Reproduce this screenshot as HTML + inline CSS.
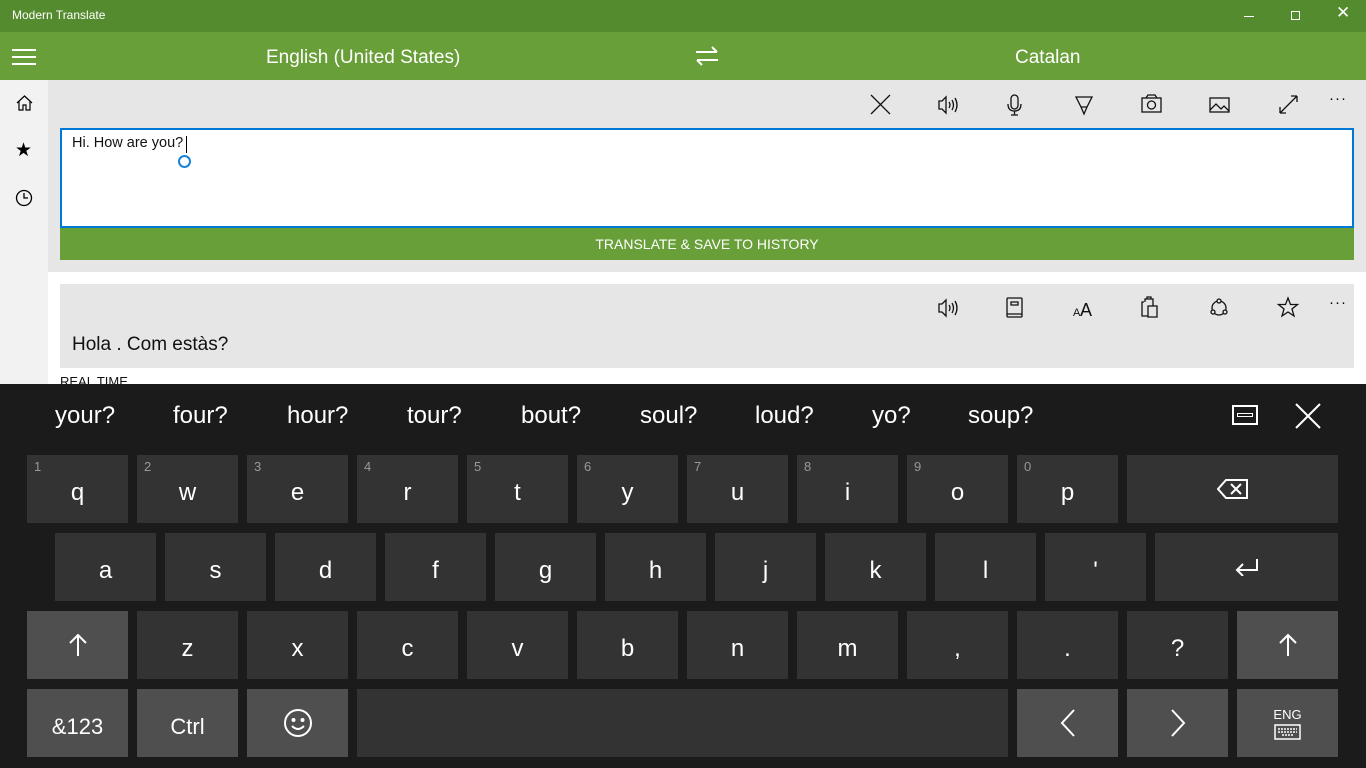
<!DOCTYPE html><html><head><meta charset="utf-8"><style>
*{margin:0;padding:0;box-sizing:border-box}
body{width:1366px;height:768px;overflow:hidden;position:relative;font-family:"Segoe UI","Liberation Sans",sans-serif;background:#fff}
.a{position:absolute}
.k{position:absolute;width:101px;height:68px;background:#333;color:#fff;font-size:24px;display:flex;align-items:center;justify-content:center;padding-top:8px}
.k.s{background:#4f4f4f}
.k.n{padding-top:0}
.k i{position:absolute;left:7px;top:4px;font-style:normal;font-size:13px;color:#999}
.sug{position:absolute;top:402px;color:#fff;font-size:24px}
svg{position:absolute}
</style></head><body>
<div class="a" style="left:0;top:0;width:1366px;height:32px;background:#548b2e"></div>
<div class="a" style="left:12px;top:8px;color:#fff;font-size:12px">Modern Translate</div>
<div class="a" style="left:1244px;top:16px;width:10px;height:1px;background:#fff"></div>
<div class="a" style="left:1291px;top:11px;width:9px;height:9px;border:1px solid #fff"></div>
<div class="a" style="left:1336px;top:3px;color:#fff;font-size:17px">✕</div>
<div class="a" style="left:0;top:32px;width:1366px;height:48px;background:#689f38"></div>
<div class="a" style="left:12px;top:49px;width:24px;height:2px;background:#fff;box-shadow:0 7px 0 #fff,0 14px 0 #fff"></div>
<div class="a" style="left:266px;top:47px;color:#fff;font-size:19px">English (United States)</div>
<div class="a" style="left:1015px;top:47px;color:#fff;font-size:19px">Catalan</div>
<svg style="left:694px;top:46px" width="26" height="20" viewBox="0 0 26 20" fill="none" stroke="#fff" stroke-width="2"><path d="M2 6h21M18 1l5 5M24 14H3M8 19l-5-5"/></svg>
<div class="a" style="left:0;top:80px;width:48px;height:304px;background:#f2f2f2"></div>
<svg style="left:16px;top:95px" width="17" height="16" viewBox="0 0 17 16" fill="none" stroke="#000" stroke-width="1.2"><path d="M1 8L8.5 1 16 8M3 6v9h4v-5h3v5h4V6"/></svg>
<div class="a" style="left:15px;top:139px;font-size:19px">★</div>
<svg style="left:15px;top:189px" width="18" height="18" fill="none" stroke="#000" stroke-width="1.3"><circle cx="9" cy="9" r="7.5"/><path d="M9 4v5h4"/></svg>
<div class="a" style="left:48px;top:80px;width:1318px;height:192px;background:#e6e6e6"></div>
<svg style="left:868px;top:92px" width="490" height="26" fill="none" stroke="#111" stroke-width="1.3">
<path d="M3 3l19 19M22 3L3 22"/>
<path d="M71 9h3l4-4v16l-4-4h-3zM81 10q2 3 0 6M84 8q3 5 0 10M87 6q4 7 0 14"/>
<rect x="143" y="3" width="7" height="14" rx="3.5"/><path d="M140 12q0 7 6.5 7t6.5-7M146.5 19v4M143 23h7"/>
<path d="M208 5h16l-5 10h-6zM213 15l3 7 3-7"/>
<rect x="274" y="6" width="19" height="14"/><circle cx="283.5" cy="13" r="4"/><path d="M278 6l2-3h7l2 3"/>
<rect x="342" y="6" width="19" height="14"/><path d="M342 18l6-6 5 5 3-3 5 5"/>
<path d="M412 21l17-17M412 21v-6M412 21h6M429 4h-6M429 4v6"/>
</svg>
<div class="a" style="left:1329px;top:90px;font-size:15px;letter-spacing:1px">···</div>
<div class="a" style="left:60px;top:128px;width:1294px;height:100px;background:#fff;border:2px solid #0078d7"></div>
<div class="a" style="left:72px;top:135px;font-size:14.5px;color:#111">Hi. How are you?</div>
<div class="a" style="left:186px;top:136px;width:1px;height:17px;background:#000"></div>
<div class="a" style="left:178px;top:155px;width:13px;height:13px;border:2px solid #1a83d8;border-radius:50%"></div>
<div class="a" style="left:60px;top:228px;width:1294px;height:32px;background:#689f38;color:#fff;font-size:14px;text-align:center;line-height:32px">TRANSLATE &amp; SAVE TO HISTORY</div>
<div class="a" style="left:60px;top:284px;width:1294px;height:84px;background:#e6e6e6"></div>
<svg style="left:930px;top:295px" width="380" height="26" fill="none" stroke="#111" stroke-width="1.3">
<path d="M9 9h3l4-4v16l-4-4h-3zM19 10q2 3 0 6M22 8q3 5 0 10M25 6q4 7 0 14"/>
<rect x="77" y="3" width="15" height="19" rx="1"/><path d="M77 19h15M81 7h7v3h-7z"/>
<text x="143" y="21" font-size="11" fill="#111" stroke="none" font-family="Liberation Sans">A</text><text x="150" y="21" font-size="18" fill="#111" stroke="none" font-family="Liberation Sans">A</text>
<path d="M214 7h-2v14h6M218 11h9v11h-9zM215 7v-3h8v7M217 4h4v-2h-4z"/>
<circle cx="289" cy="13" r="7"/><circle cx="289" cy="6" r="2" fill="#e6e6e6"/><circle cx="283" cy="17" r="2" fill="#e6e6e6"/><circle cx="295" cy="17" r="2" fill="#e6e6e6"/>
<path d="M358 3l2.5 6.5h7l-5.5 4.5 2 7-6-4-6 4 2-7-5.5-4.5h7z"/>
</svg>
<div class="a" style="left:1329px;top:294px;font-size:15px;letter-spacing:1px">···</div>
<div class="a" style="left:72px;top:334px;font-size:19px;color:#111">Hola . Com estàs?</div>
<div class="a" style="left:60px;top:374px;font-size:13px;color:#111">REAL TIME</div>
<div class="a" style="left:0;top:384px;width:1366px;height:384px;background:#1b1b1b"></div>
<div class="sug" style="left:55px">your?</div><div class="sug" style="left:173px">four?</div><div class="sug" style="left:287px">hour?</div><div class="sug" style="left:407px">tour?</div><div class="sug" style="left:521px">bout?</div><div class="sug" style="left:640px">soul?</div><div class="sug" style="left:755px">loud?</div><div class="sug" style="left:872px">yo?</div><div class="sug" style="left:968px">soup?</div>
<div class="a" style="left:1232px;top:405px;width:26px;height:20px;border:2px solid #fff"><div style="margin:6px 3px;height:4px;border:1.5px solid #fff"></div></div>
<svg style="left:1294px;top:402px" width="28" height="28" stroke="#fff" stroke-width="2"><path d="M2 2l24 24M26 2L2 26"/></svg>
<div class="k" style="left:27px;top:455px"><i>1</i>q</div><div class="k" style="left:137px;top:455px"><i>2</i>w</div><div class="k" style="left:247px;top:455px"><i>3</i>e</div><div class="k" style="left:357px;top:455px"><i>4</i>r</div><div class="k" style="left:467px;top:455px"><i>5</i>t</div><div class="k" style="left:577px;top:455px"><i>6</i>y</div><div class="k" style="left:687px;top:455px"><i>7</i>u</div><div class="k" style="left:797px;top:455px"><i>8</i>i</div><div class="k" style="left:907px;top:455px"><i>9</i>o</div><div class="k" style="left:1017px;top:455px"><i>0</i>p</div>
<div class="k n" style="left:1127px;top:455px;width:211px"><svg style="position:static" width="32" height="22" fill="none" stroke="#fff" stroke-width="2"><path d="M9 2h21v18H9L1 11zM14 6l10 10M24 6L14 16"/></svg></div>
<div class="k" style="left:55px;top:533px">a</div><div class="k" style="left:165px;top:533px">s</div><div class="k" style="left:275px;top:533px">d</div><div class="k" style="left:385px;top:533px">f</div><div class="k" style="left:495px;top:533px">g</div><div class="k" style="left:605px;top:533px">h</div><div class="k" style="left:715px;top:533px">j</div><div class="k" style="left:825px;top:533px">k</div><div class="k" style="left:935px;top:533px">l</div><div class="k" style="left:1045px;top:533px">'</div>
<div class="k n" style="left:1155px;top:533px;width:183px"><svg style="position:static" width="24" height="18" fill="none" stroke="#fff" stroke-width="2"><path d="M22 1v11H2M8 6l-6 6 6 6"/></svg></div>
<div class="k s n" style="left:27px;top:611px"><svg style="position:static" width="20" height="24" fill="none" stroke="#fff" stroke-width="2"><path d="M10 23V2M2 10l8-8 8 8"/></svg></div>
<div class="k" style="left:137px;top:611px">z</div><div class="k" style="left:247px;top:611px">x</div><div class="k" style="left:357px;top:611px">c</div><div class="k" style="left:467px;top:611px">v</div><div class="k" style="left:577px;top:611px">b</div><div class="k" style="left:687px;top:611px">n</div><div class="k" style="left:797px;top:611px">m</div><div class="k" style="left:907px;top:611px">,</div><div class="k" style="left:1017px;top:611px">.</div><div class="k" style="left:1127px;top:611px">?</div>
<div class="k s n" style="left:1237px;top:611px"><svg style="position:static" width="20" height="24" fill="none" stroke="#fff" stroke-width="2"><path d="M10 23V2M2 10l8-8 8 8"/></svg></div>
<div class="k s" style="left:27px;top:689px;font-size:22px">&amp;123</div><div class="k s" style="left:137px;top:689px;font-size:22px">Ctrl</div>
<div class="k s n" style="left:247px;top:689px"><svg style="position:static" width="30" height="30" fill="none" stroke="#fff" stroke-width="2"><circle cx="15" cy="15" r="13"/><circle cx="10.5" cy="12" r="1" fill="#fff"/><circle cx="19.5" cy="12" r="1" fill="#fff"/><path d="M9 18q6 6 12 0"/></svg></div>
<div class="k" style="left:357px;top:689px;width:651px"></div>
<div class="k s n" style="left:1017px;top:689px"><svg style="position:static" width="16" height="28" fill="none" stroke="#fff" stroke-width="2"><path d="M14 1L2 14l12 13"/></svg></div>
<div class="k s n" style="left:1127px;top:689px"><svg style="position:static" width="16" height="28" fill="none" stroke="#fff" stroke-width="2"><path d="M2 1l12 13L2 27"/></svg></div>
<div class="k s n" style="left:1237px;top:689px;flex-direction:column;font-size:13px"><div>ENG</div><svg style="position:static;margin-top:2px" width="27" height="16" fill="none" stroke="#fff" stroke-width="1.5"><rect x="1" y="1" width="25" height="14"/><path d="M4 5h19M4 8h19M8 11h11" stroke-dasharray="2 1"/></svg></div>
</body></html>
